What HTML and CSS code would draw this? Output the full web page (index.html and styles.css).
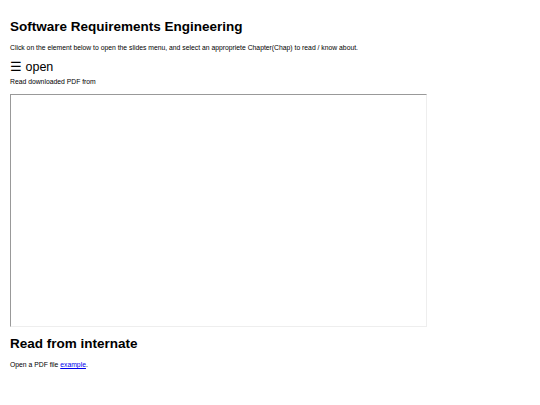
FILE: index.html
```html
<!DOCTYPE html>
<html lang="en">
<head>
<meta charset="utf-8">
<title>Software Requirements Engineering</title>
<link rel="stylesheet" href="styles.css">
</head>
<body>
<h2 class="title">Software Requirements Engineering</h2>
<p class="note">Click on the element below to open the slides menu, and select an appropriete Chapter(Chap) to read / know about.</p>
<div class="opener">&#9776; open</div>
<p class="note note-tight">Read downloaded PDF from</p>
<div class="viewer"></div>
<h2 class="title title-second">Read from internate</h2>
<p class="note">Open a PDF file <a href="#" class="link">example</a>.</p>
</body>
</html>
```
FILE: styles.css
```css
html, body {
  background: #fff;
}
body {
  margin: 0;
  padding: 10px;
  font-family: "Liberation Sans", Arial, sans-serif;
  color: #000;
}
.title {
  font-size: 13.5px;
  line-height: 16px;
  font-weight: bold;
  margin: 9px 0 9px;
}
.title-second {
  margin-top: 9px;
}
.note {
  font-size: 6.8px;
  line-height: 8px;
  margin: 0 0 8px;
}
.note-tight {
  margin-top: 4px;
  margin-bottom: 8px;
}
.opener {
  font-size: 12.5px;
  line-height: 14px;
  cursor: pointer;
}
.viewer {
  width: 415px;
  height: 231px;
  border-style: solid;
  border-width: 1.5px;
  border-color: #999 #eee #eee #999;
}
.link {
  color: #00e;
  text-decoration: underline;
}
```
